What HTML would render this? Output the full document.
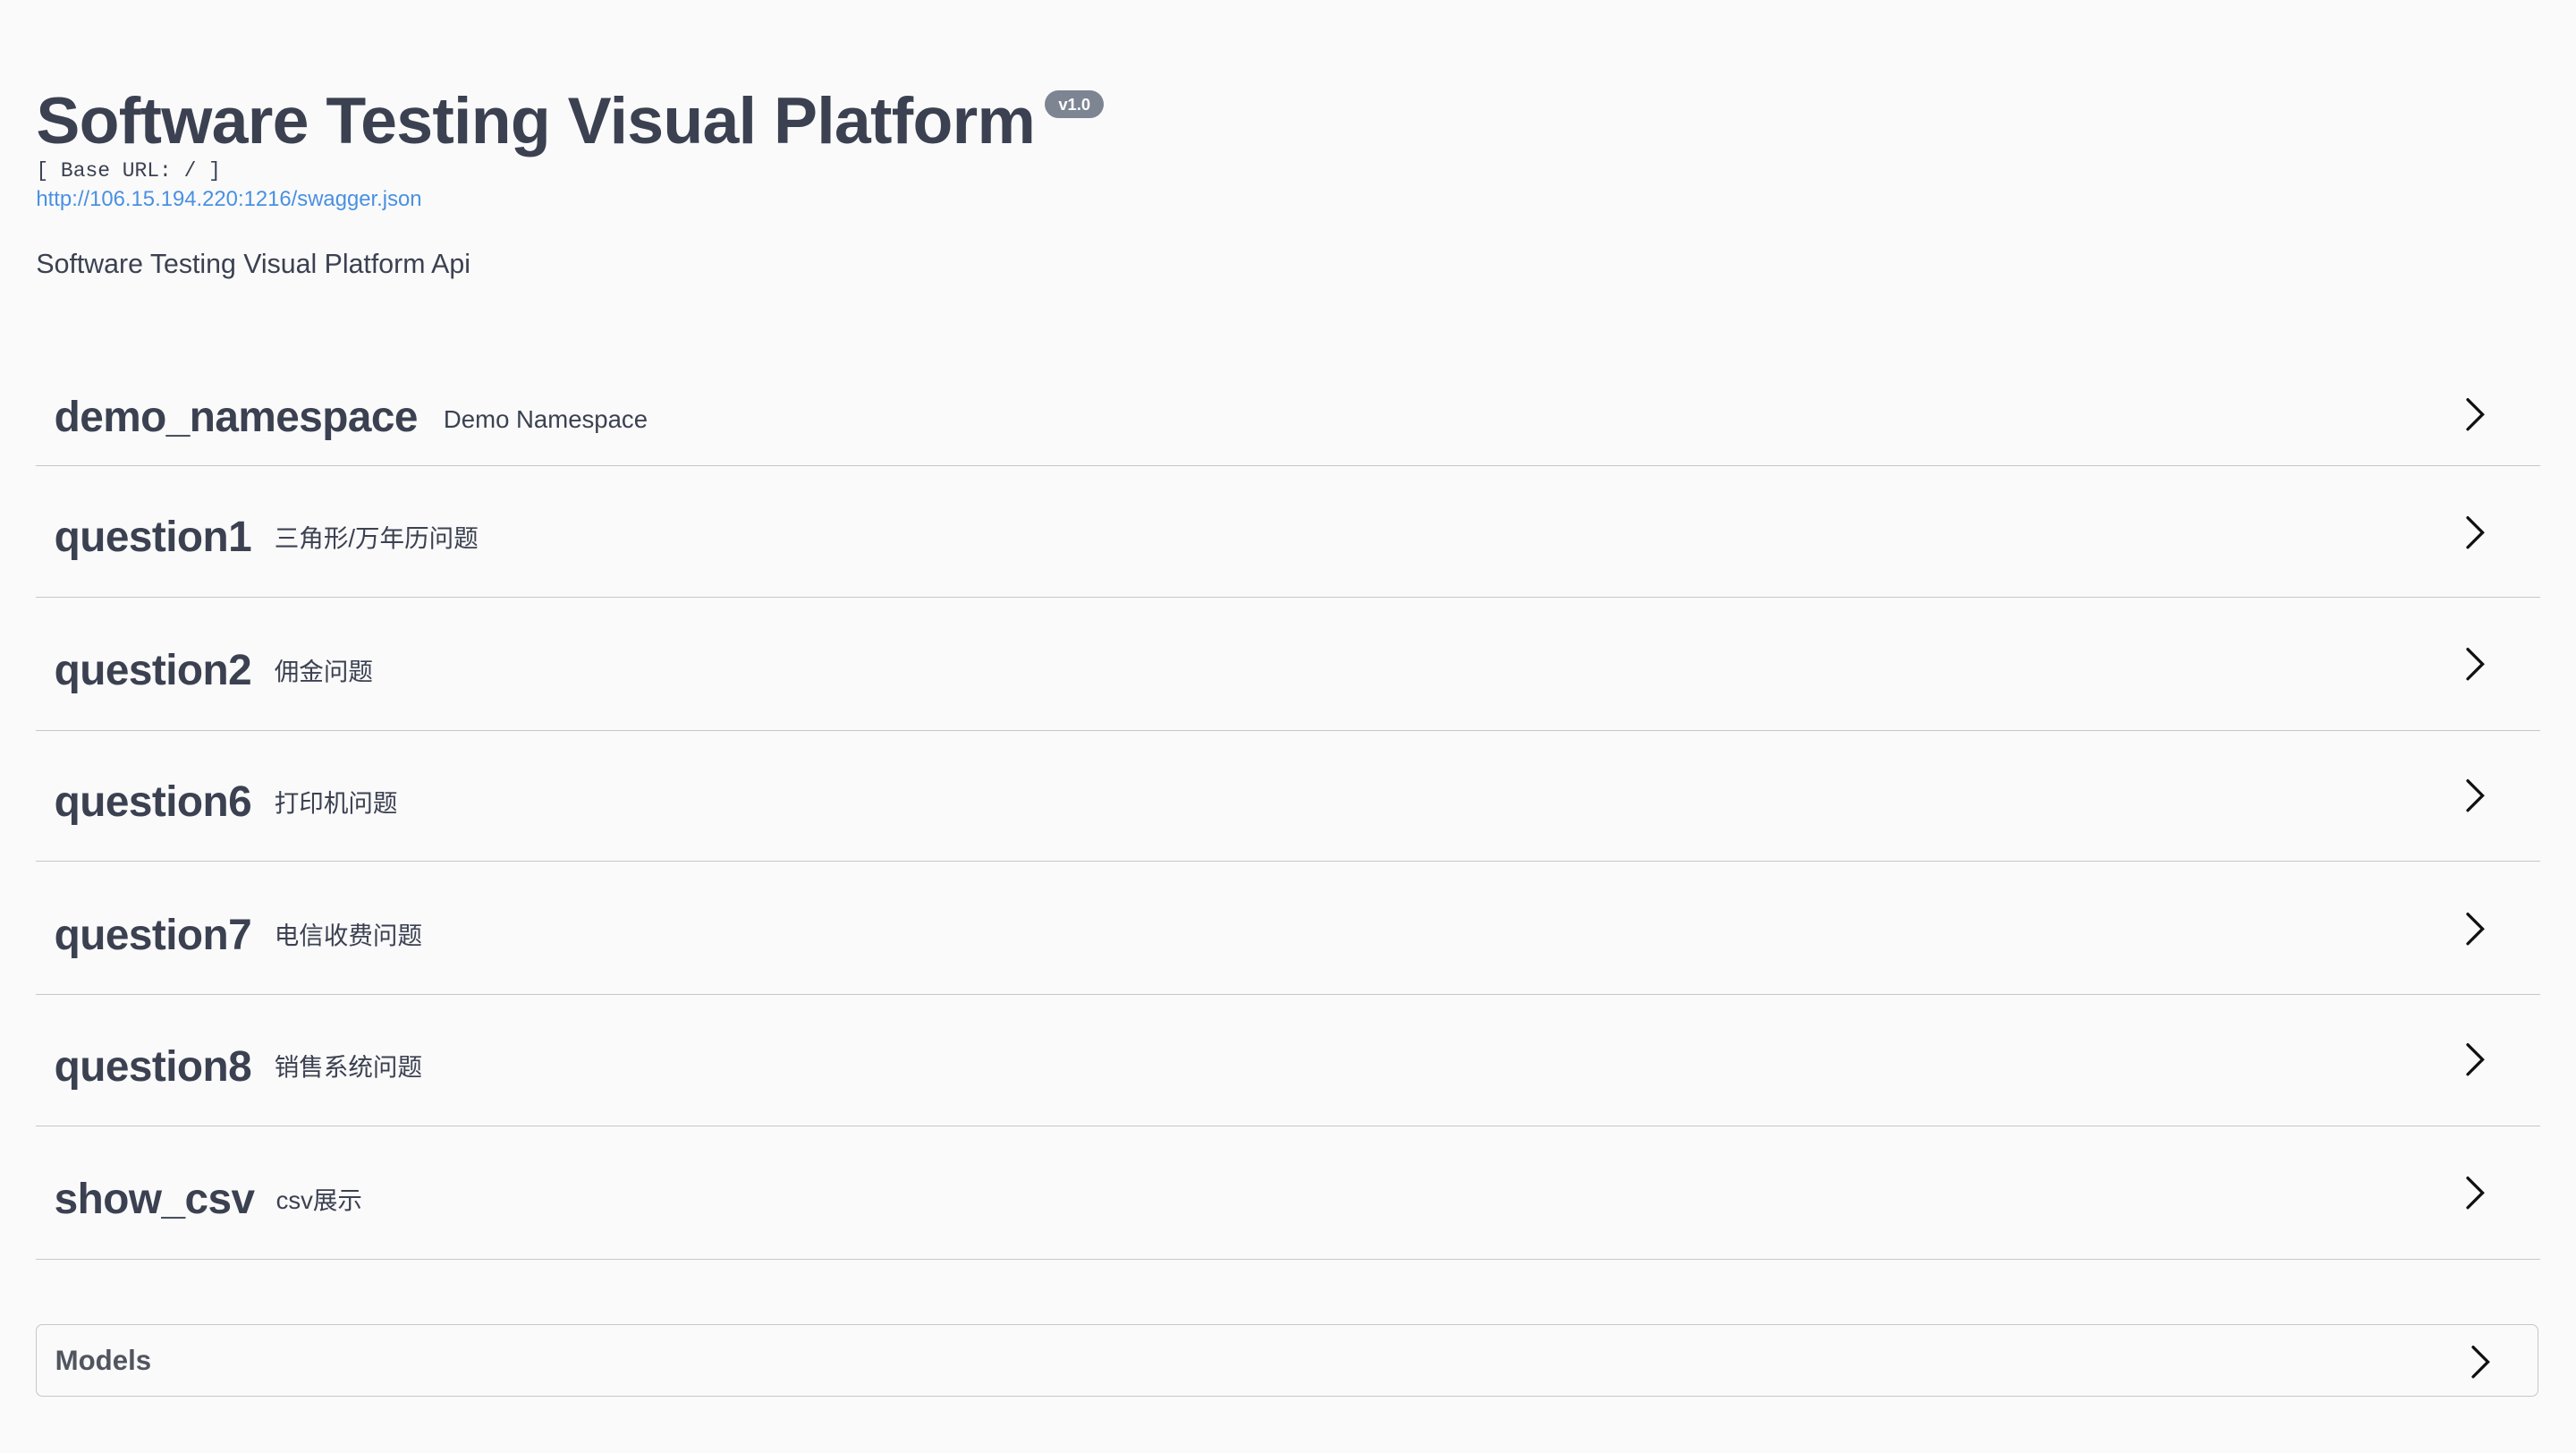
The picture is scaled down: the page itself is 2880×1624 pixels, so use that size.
<!DOCTYPE html>
<html><head><meta charset="utf-8"><style>
html,body{margin:0;padding:0;background:#fafafa;}
body{width:1568px;height:884px;zoom:1.836735;position:relative;overflow:hidden;font-family:"Liberation Sans","Noto Sans CJK SC",sans-serif;color:#3b4151;}
.t{position:absolute;left:22px;top:50px;font-size:40px;font-weight:bold;white-space:nowrap;letter-spacing:-0.4px}
.badge{position:absolute;left:636px;top:55px;width:36px;height:17px;border-radius:9px;background:#7d8492;color:#fff;font-size:10px;font-weight:bold;text-align:center;line-height:17px}
.base{position:absolute;left:22px;top:97px;font-family:"Liberation Mono",monospace;font-size:12.5px;color:#3b4151}
.link{position:absolute;left:22px;top:114px;font-size:13px;color:#4990e2}
.desc{position:absolute;left:22px;top:152px;font-size:16.5px}
.row{position:absolute;left:22px;width:1524px;height:80px;border-bottom:1px solid #c7c7cb}
.row .n{position:absolute;left:11px;bottom:21px;font-size:26px;font-weight:bold;letter-spacing:-0.3px}
.row .d{position:absolute;bottom:26px;font-size:15px}
.chev{position:absolute;width:22px;height:22px}
.models{position:absolute;left:22px;top:806px;width:1522px;height:43px;border:1px solid #c7c7cb;border-radius:4px}
.models span{position:absolute;left:11px;top:12px;font-size:17px;font-weight:bold;color:#505560}
</style></head><body>
<div class="t">Software Testing Visual Platform</div>
<div class="badge">v1.0</div>
<div class="base">[ Base URL: / ]</div>
<div class="link">http://106.15.194.220:1216/swagger.json</div>
<div class="desc">Software Testing Visual Platform Api</div>

<div class="row" style="top:203px"><span class="n" style="bottom:14px">demo_namespace</span><span class="d" style="left:248px;bottom:19px">Demo Namespace</span><svg class="chev" style="right:28px;top:38px" viewBox="0 0 22 22"><path d="M6 2 L15 11 L6 20" fill="none" stroke="#111" stroke-width="1.8" stroke-linecap="round"/></svg></div>
<div class="row" style="top:283px"><span class="n">question1</span><span class="d" style="left:145px">三角形/万年历问题</span><svg class="chev" style="right:28px;top:30px" viewBox="0 0 22 22"><path d="M6 2 L15 11 L6 20" fill="none" stroke="#111" stroke-width="1.8" stroke-linecap="round"/></svg></div>
<div class="row" style="top:364px"><span class="n">question2</span><span class="d" style="left:145px">佣金问题</span><svg class="chev" style="right:28px;top:29px" viewBox="0 0 22 22"><path d="M6 2 L15 11 L6 20" fill="none" stroke="#111" stroke-width="1.8" stroke-linecap="round"/></svg></div>
<div class="row" style="top:444px"><span class="n">question6</span><span class="d" style="left:145px">打印机问题</span><svg class="chev" style="right:28px;top:29px" viewBox="0 0 22 22"><path d="M6 2 L15 11 L6 20" fill="none" stroke="#111" stroke-width="1.8" stroke-linecap="round"/></svg></div>
<div class="row" style="top:525px"><span class="n">question7</span><span class="d" style="left:145px">电信收费问题</span><svg class="chev" style="right:28px;top:29px" viewBox="0 0 22 22"><path d="M6 2 L15 11 L6 20" fill="none" stroke="#111" stroke-width="1.8" stroke-linecap="round"/></svg></div>
<div class="row" style="top:605px"><span class="n">question8</span><span class="d" style="left:145px">销售系统问题</span><svg class="chev" style="right:28px;top:29px" viewBox="0 0 22 22"><path d="M6 2 L15 11 L6 20" fill="none" stroke="#111" stroke-width="1.8" stroke-linecap="round"/></svg></div>
<div class="row" style="top:686px"><span class="n">show_csv</span><span class="d" style="left:146px">csv展示</span><svg class="chev" style="right:28px;top:29px" viewBox="0 0 22 22"><path d="M6 2 L15 11 L6 20" fill="none" stroke="#111" stroke-width="1.8" stroke-linecap="round"/></svg></div>

<div class="models"><span>Models</span><svg class="chev" style="right:23px;top:11px" viewBox="0 0 22 22"><path d="M6 2 L15 11 L6 20" fill="none" stroke="#111" stroke-width="1.8" stroke-linecap="round"/></svg></div>
</body></html>
